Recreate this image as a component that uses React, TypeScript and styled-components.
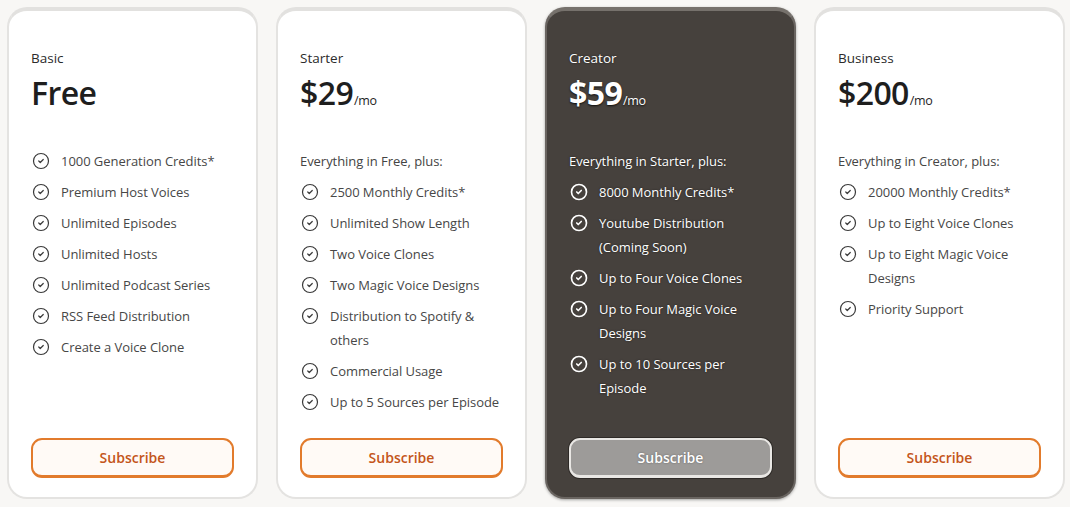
import React from "react";
import styled, { createGlobalStyle, css } from "styled-components";
import { CircleCheck } from "lucide-react";

const Global = createGlobalStyle`
  html, body { margin: 0; padding: 0; background: #f8f7f5; }
  body { font-family: "Open Sans", "Noto Sans", sans-serif; }
  * { box-sizing: border-box; }
`;

const Page = styled.div`
  display: grid;
  grid-template-columns: repeat(4, 251px);
  column-gap: 18px;
  padding: 7px 5px 8px 7px;
  height: 507px;
`;

const Card = styled.div<{ $dark?: boolean }>`
  display: flex;
  flex-direction: column;
  border-radius: 20px;
  padding: 37px 22px 19px;
  ${(p) =>
    p.$dark
      ? css`
          background: #46413d;
          border: 2px solid #6a6561;
          border-top: 4px solid #76716c;
          box-shadow: 0 1px 3px rgba(0, 0, 0, 0.35);
          color: #fff;
        `
      : css`
          background: #fff;
          border: 2px solid #e4e3e1;
          border-top: 4px solid #e2e1df;
          color: #333;
        `}
`;

const PlanName = styled.div<{ $dark?: boolean }>`
  font-size: 13.5px;
  line-height: 20px;
  color: ${(p) => (p.$dark ? "#fff" : "#2b2b2b")};
  ${(p) => p.$dark && css`text-shadow: 0 0 2px rgba(0,0,0,0.6);`}
`;

const PriceRow = styled.div<{ $dark?: boolean }>`
  margin-top: 5px;
  display: flex;
  align-items: baseline;
  color: ${(p) => (p.$dark ? "#fff" : "#1e1e1e")};
  ${(p) => p.$dark && css`text-shadow: 0 1px 2px rgba(0,0,0,0.8);`}
`;

const Price = styled.span<{ $dark?: boolean }>`
  font-size: 32px;
  line-height: 40px;
  font-weight: ${(p) => (p.$dark ? 700 : 600)};
  letter-spacing: -0.6px;
`;

const Per = styled.span`
  font-size: 12.5px;
  margin-left: 1px;
  letter-spacing: -0.4px;
`;

const List = styled.ul`
  list-style: none;
  margin: 36px 0 0;
  padding: 0;
  display: flex;
  flex-direction: column;
  gap: 7px;
`;

const Intro = styled.li<{ $dark?: boolean }>`
  font-size: 13px;
  line-height: 24px;
  letter-spacing: -0.05px;
  color: ${(p) => (p.$dark ? "#fff" : "#444")};
  ${(p) => p.$dark && css`text-shadow: 0 0 2px rgba(0,0,0,0.6);`}
`;

const Item = styled.li<{ $dark?: boolean }>`
  display: grid;
  grid-template-columns: 30px 1fr;
  align-items: start;
  font-size: 13px;
  line-height: 24px;
  letter-spacing: -0.05px;
  color: ${(p) => (p.$dark ? "#fff" : "#474747")};
  ${(p) => p.$dark && css`text-shadow: 0 0 2px rgba(0,0,0,0.6);`}
`;

const IconBox = styled.span<{ $dark?: boolean }>`
  display: flex;
  align-items: center;
  height: 24px;
  margin-left: 1px;
  color: ${(p) => (p.$dark ? "#fff" : "#3a3a3a")};
`;

const Button = styled.button<{ $dark?: boolean }>`
  margin-top: auto;
  width: 100%;
  height: 40px;
  border-radius: 11px;
  font-family: inherit;
  font-size: 14px;
  font-weight: 600;
  cursor: pointer;
  ${(p) =>
    p.$dark
      ? css`
          background: #9d9b99;
          border: 2px solid #e9e7e4;
          border-bottom-width: 3px;
          color: #fff;
          text-shadow: 0 0 2px rgba(0,0,0,0.4);
          box-shadow: 0 0 0 1px #2e2a27;
        `
      : css`
          background: #fffaf6;
          border: 2px solid #e27b2c;
          border-bottom-width: 3px;
          color: #c4551a;
        `}
`;

type Plan = {
  name: string;
  price: string;
  per?: boolean;
  intro?: string;
  features: string[];
  dark?: boolean;
};

const plans: Plan[] = [
  {
    name: "Basic",
    price: "Free",
    features: [
      "1000 Generation Credits*",
      "Premium Host Voices",
      "Unlimited Episodes",
      "Unlimited Hosts",
      "Unlimited Podcast Series",
      "RSS Feed Distribution",
      "Create a Voice Clone",
    ],
  },
  {
    name: "Starter",
    price: "$29",
    per: true,
    intro: "Everything in Free, plus:",
    features: [
      "2500 Monthly Credits*",
      "Unlimited Show Length",
      "Two Voice Clones",
      "Two Magic Voice Designs",
      "Distribution to Spotify & others",
      "Commercial Usage",
      "Up to 5 Sources per Episode",
    ],
  },
  {
    name: "Creator",
    price: "$59",
    per: true,
    dark: true,
    intro: "Everything in Starter, plus:",
    features: [
      "8000 Monthly Credits*",
      "Youtube Distribution (Coming Soon)",
      "Up to Four Voice Clones",
      "Up to Four Magic Voice Designs",
      "Up to 10 Sources per Episode",
    ],
  },
  {
    name: "Business",
    price: "$200",
    per: true,
    intro: "Everything in Creator, plus:",
    features: [
      "20000 Monthly Credits*",
      "Up to Eight Voice Clones",
      "Up to Eight Magic Voice Designs",
      "Priority Support",
    ],
  },
];

export default function App() {
  return (
    <>
      <Global />
      <Page>
        {plans.map((p) => (
          <Card key={p.name} $dark={p.dark}>
            <PlanName $dark={p.dark}>{p.name}</PlanName>
            <PriceRow $dark={p.dark}>
              <Price $dark={p.dark}>{p.price}</Price>
              {p.per && <Per>/mo</Per>}
            </PriceRow>
            <List>
              {p.intro && <Intro $dark={p.dark}>{p.intro}</Intro>}
              {p.features.map((f) => (
                <Item key={f} $dark={p.dark}>
                  <IconBox $dark={p.dark}>
                    <CircleCheck size={18} strokeWidth={p.dark ? 2.2 : 1.6} />
                  </IconBox>
                  <span>{f}</span>
                </Item>
              ))}
            </List>
            <Button $dark={p.dark}>Subscribe</Button>
          </Card>
        ))}
      </Page>
    </>
  );
}
